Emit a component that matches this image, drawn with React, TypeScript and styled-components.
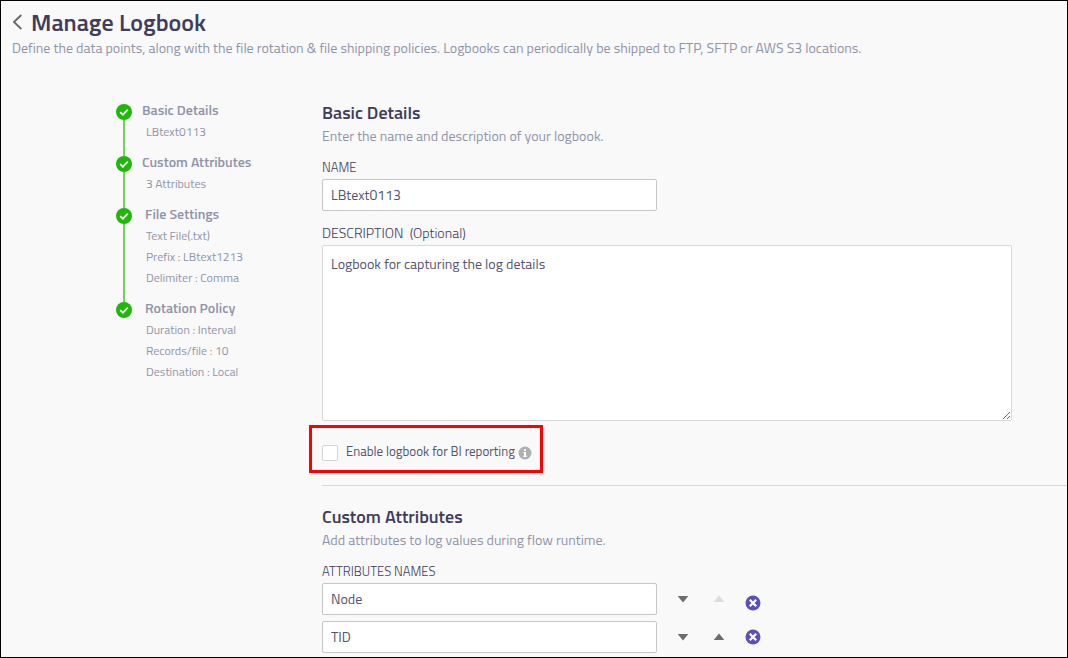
import React from "react";
import styled, { createGlobalStyle } from "styled-components";

const ink = "#3f3c5c";
const body = "#55536e";
const muted = "#9094aa";

const GlobalStyle = createGlobalStyle`
  *, *::before, *::after { box-sizing: border-box; }
  body {
    margin: 0;
    background: #f9f9f9;
    color: ${body};
    font-family: "Titillium Web", Roboto, "Liberation Sans", sans-serif;
    font-size: 14px;
    line-height: 20px;
  }
  h1, h2, h3, p, ol, ul { margin: 0; padding: 0; font-weight: inherit; }
  ol, ul { list-style: none; }
  input, textarea, button { font: inherit; color: inherit; }
`;

const Page = styled.div`
  min-height: 100vh;
  border: 1px solid #000;
  padding-bottom: 4px;
`;

const Header = styled.header`
  padding: 7px 11px 0;
`;

const TitleRow = styled.div`
  display: flex;
  align-items: center;
  gap: 8px;
`;

const Title = styled.h1`
  font-size: 24px;
  line-height: 28px;
  font-weight: 600;
  color: ${ink};
`;

const IconButton = styled.button`
  display: flex;
  align-items: center;
  justify-content: center;
  padding: 0;
  border: 0;
  background: none;
  cursor: pointer;
  &:disabled { cursor: default; }
`;

const Lead = styled.p`
  color: ${muted};
  margin-top: 2px;
`;

const Columns = styled.div`
  display: flex;
  align-items: flex-start;
  padding-top: 41px;
`;

const Sidebar = styled.nav`
  flex: 0 0 321px;
  padding-left: 115px;
`;

const Step = styled.li`
  display: flex;
  gap: 10px;
`;

const Rail = styled.div`
  display: flex;
  flex-direction: column;
  align-items: center;
  flex: 0 0 16px;
  margin: 5px 0 -5px;
  svg { display: block; flex: none; }
`;

const RailLine = styled.span`
  flex: 1;
  width: 2px;
  background: #74d160;
`;

const StepBody = styled.div`
  padding-bottom: 9px;
`;

const StepTitle = styled.h3<{ $inset?: boolean }>`
  font-size: 14px;
  line-height: 22px;
  font-weight: 600;
  color: ${muted};
  padding-left: ${(p) => (p.$inset ? 3 : 0)}px;
`;

const StepNote = styled.li`
  font-size: 12px;
  line-height: 21px;
  color: ${muted};
  padding-left: 4px;
`;

const Content = styled.main`
  flex: 1;
  min-width: 0;
  padding-top: 2px;
`;

const Section = styled.section`
  & + & {
    border-top: 1px solid #d8d8d8;
    padding-top: 19px;
  }
`;

const SectionTitle = styled.h2`
  font-size: 18px;
  line-height: 24px;
  font-weight: 600;
  color: ${ink};
`;

const SectionText = styled.p`
  color: ${muted};
  margin: 1px 0 11px;
`;

const Field = styled.div`
  & + & { margin-top: 12px; }
`;

const Label = styled.label`
  display: block;
  margin-bottom: 2px;
  font-size: 13px;
  font-weight: 300;
  color: ${ink};
`;

const OptionalLabel = styled(Label)`
  font-size: 14px;
`;

const TextInput = styled.input`
  display: block;
  width: 335px;
  max-width: 100%;
  height: 32px;
  padding: 0 8px 2px;
  border: 1px solid #c6c6c6;
  border-radius: 2px;
  background: #fff;
`;

const TextArea = styled.textarea`
  display: block;
  width: calc(100% - 55px);
  height: 176px;
  padding: 8px;
  border: 1px solid #d8d8d8;
  border-radius: 2px;
  background: #fff;
`;

const Callout = styled.div`
  display: flex;
  align-items: center;
  width: 234px;
  height: 48px;
  margin: 4px 0 12px -13px;
  padding: 4px 0 0 10px;
  border: 3px solid #f00;
`;

const Checkbox = styled.input`
  appearance: none;
  width: 16px;
  height: 16px;
  margin: 4px 8px 0 0;
  border: 1px solid #d4d4d4;
  border-radius: 2px;
  background: #fff;
  &:checked { background: #5d50b5; }
`;

const CheckLabel = styled.label`
  font-size: 13px;
  white-space: nowrap;
`;

const InfoIcon = styled.svg`
  margin: 4px 0 0 3px;
`;

const AttributeEditor = styled.div`
  display: flex;
  align-items: flex-start;
  gap: 18px;
`;

const AttributeList = styled.ul`
  display: grid;
  gap: 6px;
`;

const AttributeRow = styled.li`
  display: flex;
  align-items: center;
  gap: 18px;
`;

const MoveActions = styled.div`
  display: flex;
  gap: 20px;
  ${IconButton} { width: 16px; height: 16px; }
`;

const RemoveList = styled.ul`
  display: grid;
  gap: 18px;
  padding-top: 12px;
`;

const CheckMark = () => (
  <svg width="16" height="16" viewBox="0 0 16 16" aria-hidden="true">
    <circle cx="8" cy="8" r="8" fill="#1db808" />
    <path d="M4.2 8.1l2.7 2.6 4.9-5" fill="none" stroke="#fff" strokeWidth="1.8" />
  </svg>
);

const Triangle = ({ up, faded }: { up?: boolean; faded?: boolean }) => (
  <svg width="12" height="8" viewBox="0 0 12 8" aria-hidden="true">
    <path d={up ? "M.7 7L6 .5 11.3 7z" : "M.7 1h10.6L6 7.5z"} fill={faded ? "#dcdcdc" : "#6d6d6a"} />
  </svg>
);

const RemoveIcon = () => (
  <svg width="16" height="16" viewBox="0 0 16 16" aria-hidden="true">
    <circle cx="8" cy="8" r="7.5" fill="#5d50b5" />
    <path d="M4.8 4.8l6.4 6.4M11.2 4.8l-6.4 6.4" stroke="#fff" strokeWidth="2.2" />
  </svg>
);

const steps = [
  { title: "Basic Details", notes: ["LBtext0113"] },
  { title: "Custom Attributes", notes: ["3 Attributes"] },
  { title: "File Settings", inset: true, notes: ["Text File(.txt)", "Prefix : LBtext1213", "Delimiter : Comma"] },
  { title: "Rotation Policy", inset: true, notes: ["Duration : Interval", "Records/file : 10", "Destination : Local"] },
];

const attributes = ["Node", "TID"];

export default function App() {
  return (
    <Page>
      <GlobalStyle />
      <Header>
        <TitleRow>
          <IconButton aria-label="Back">
            <svg width="11" height="16" viewBox="0 0 11 16" aria-hidden="true">
              <path d="M9.3 1L2 8l7.3 7" fill="none" stroke="#666663" strokeWidth="1.8" />
            </svg>
          </IconButton>
          <Title>Manage Logbook</Title>
        </TitleRow>
        <Lead>
          Define the data points, along with the file rotation &amp; file shipping policies. Logbooks can
          periodically be shipped to FTP, SFTP or AWS S3 locations.
        </Lead>
      </Header>
      <Columns>
        <Sidebar aria-label="Steps">
          <ol>
            {steps.map((step, i) => (
              <Step key={step.title}>
                <Rail>
                  <CheckMark />
                  {i < steps.length - 1 && <RailLine />}
                </Rail>
                <StepBody>
                  <StepTitle $inset={step.inset}>{step.title}</StepTitle>
                  <ul>
                    {step.notes.map((note) => (
                      <StepNote key={note}>{note}</StepNote>
                    ))}
                  </ul>
                </StepBody>
              </Step>
            ))}
          </ol>
        </Sidebar>
        <Content>
          <Section>
            <SectionTitle>Basic Details</SectionTitle>
            <SectionText>Enter the name and description of your logbook.</SectionText>
            <Field>
              <Label htmlFor="name">NAME</Label>
              <TextInput id="name" defaultValue="LBtext0113" />
            </Field>
            <Field>
              <OptionalLabel htmlFor="description">DESCRIPTION&nbsp; (Optional)</OptionalLabel>
              <TextArea id="description" defaultValue="Logbook for capturing the log details" />
            </Field>
            <Callout>
              <Checkbox type="checkbox" id="bi" />
              <CheckLabel htmlFor="bi">Enable logbook for BI reporting</CheckLabel>
              <InfoIcon width="14" height="14" viewBox="0 0 14 14" role="img" aria-label="Info">
                <circle cx="7" cy="7" r="6.5" fill="#b0b0b0" />
                <path d="M6 3.2h2v1.7H6zM5.4 6H8v3.8h.7V11H5.3V9.8H6V7.1h-.6z" fill="#fff" />
              </InfoIcon>
            </Callout>
          </Section>
          <Section>
            <SectionTitle>Custom Attributes</SectionTitle>
            <SectionText>Add attributes to log values during flow runtime.</SectionText>
            <Label htmlFor="attribute-0">ATTRIBUTES NAMES</Label>
            <AttributeEditor>
              <AttributeList>
                {attributes.map((name, i) => (
                  <AttributeRow key={name}>
                    <TextInput id={`attribute-${i}`} aria-label={`Attribute ${i + 1}`} defaultValue={name} />
                    <MoveActions>
                      <IconButton aria-label={`Move ${name} down`}>
                        <Triangle />
                      </IconButton>
                      <IconButton aria-label={`Move ${name} up`} disabled={i === 0}>
                        <Triangle up faded={i === 0} />
                      </IconButton>
                    </MoveActions>
                  </AttributeRow>
                ))}
              </AttributeList>
              <RemoveList>
                {attributes.map((name) => (
                  <li key={name}>
                    <IconButton aria-label={`Remove ${name}`}>
                      <RemoveIcon />
                    </IconButton>
                  </li>
                ))}
              </RemoveList>
            </AttributeEditor>
          </Section>
        </Content>
      </Columns>
    </Page>
  );
}
